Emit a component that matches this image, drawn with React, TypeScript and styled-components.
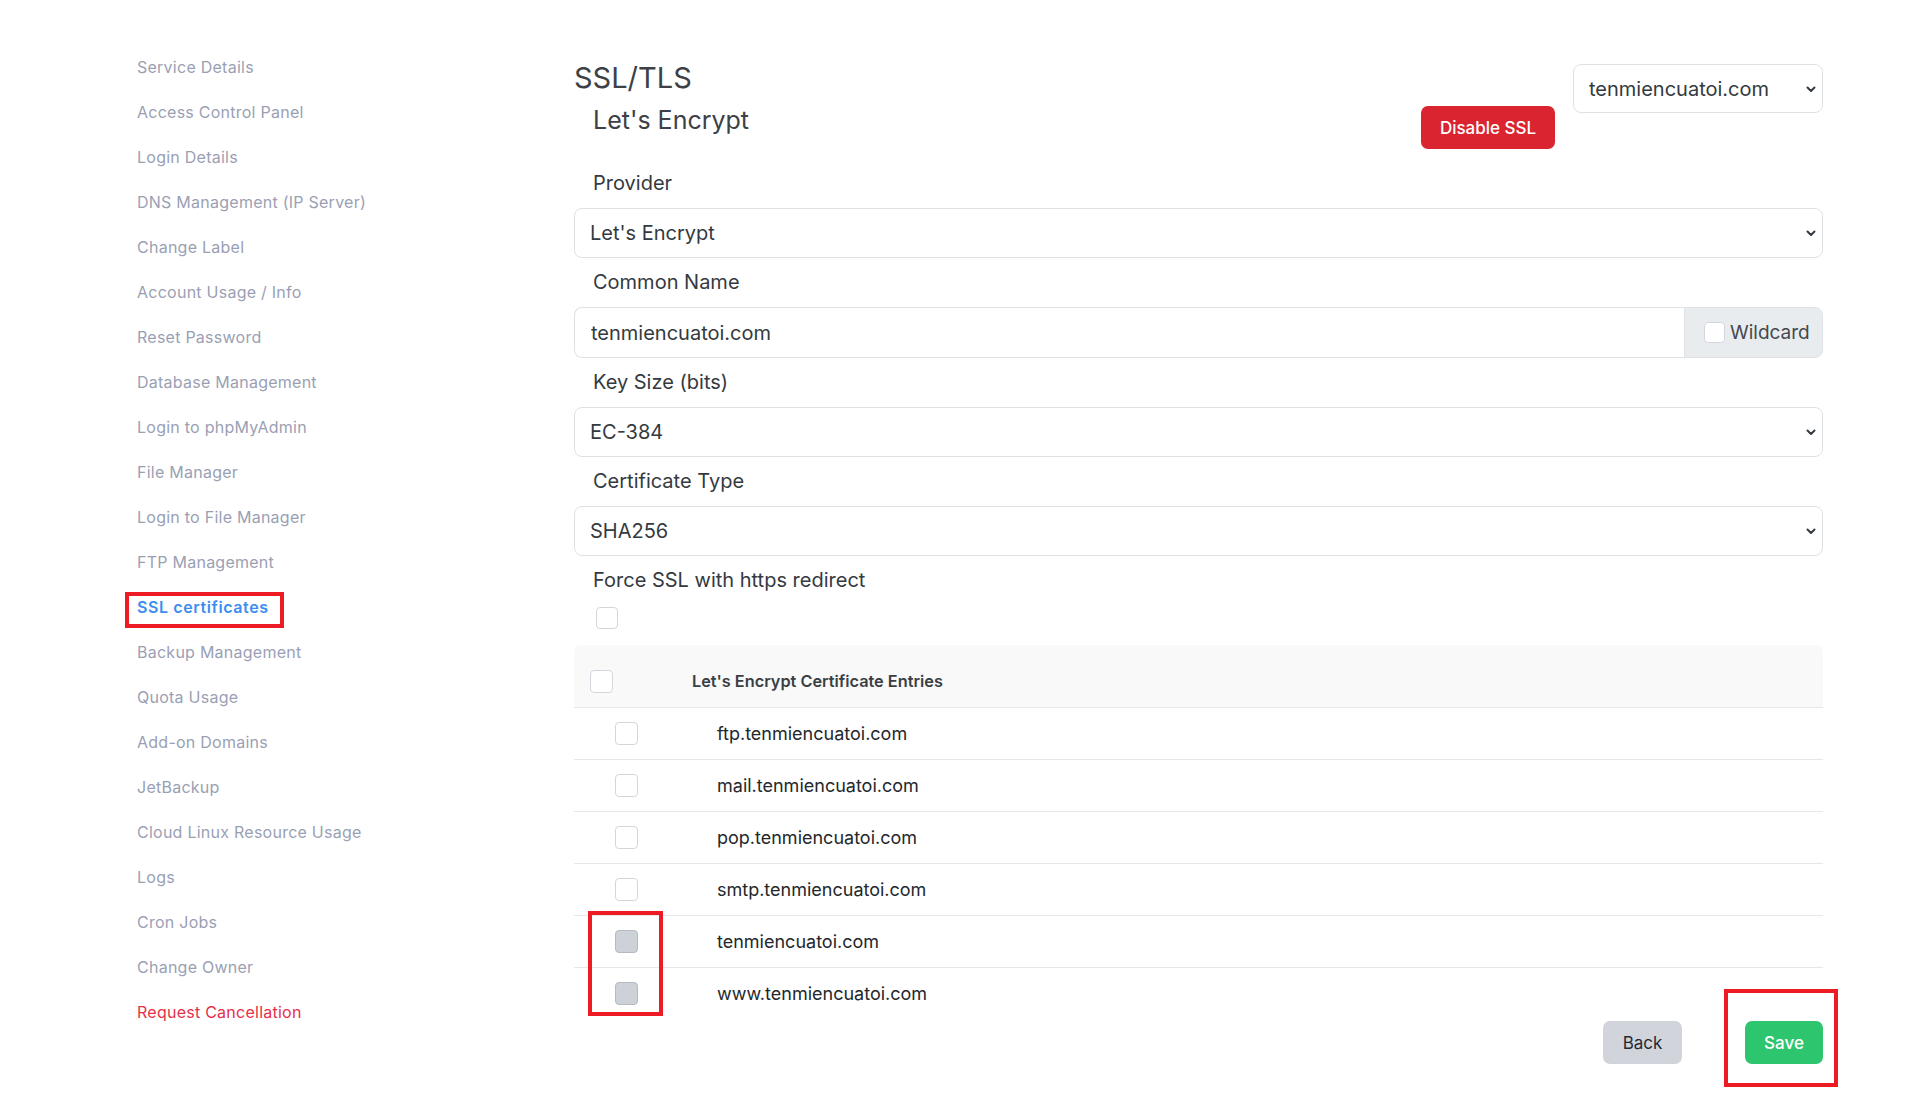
import React from "react";
import styled, { createGlobalStyle } from "styled-components";

const GlobalStyle = createGlobalStyle`
  html, body {
    margin: 0;
    padding: 0;
    background: #ffffff;
  }
  body {
    font-family: Inter, "Noto Sans", "Liberation Sans", sans-serif;
    color: #343a40;
  }
  * { box-sizing: border-box; }
`;

const ANNOTATION = "#ed1c24";

const Page = styled.div`
  display: flex;
  align-items: flex-start;
  width: 1920px;
  min-height: 1116px;
  padding-left: 137px;
`;

const Sidebar = styled.nav`
  width: 437px;
  flex-shrink: 0;
  display: flex;
  flex-direction: column;
  padding-top: 44px;
`;

const NavItem = styled.a<{ $active?: boolean; $danger?: boolean }>`
  display: flex;
  align-items: center;
  height: 45px;
  font-size: 16px;
  letter-spacing: ${(p) => (p.$active ? "0.6px" : "0.25px")};
  text-decoration: none;
  cursor: pointer;
  font-weight: ${(p) => (p.$active ? 600 : 400)};
  color: ${(p) => (p.$active ? "#3b8ef0" : p.$danger ? "#e5304a" : "#9a9fb4")};
`;

const Highlighted = styled.span`
  position: relative;
  &::after {
    content: "";
    position: absolute;
    left: -12px;
    right: -15px;
    top: -5px;
    bottom: -11px;
    border: 4px solid ${ANNOTATION};
    pointer-events: none;
  }
`;

const Main = styled.main`
  width: 1249px;
  flex-shrink: 0;
  padding-top: 60px;
  display: flex;
  flex-direction: column;
`;

const Header = styled.div`
  display: flex;
  justify-content: space-between;
  align-items: flex-start;
  height: 99px;
`;

const TitleBlock = styled.div`
  display: flex;
  flex-direction: column;
`;

const Title = styled.h1`
  margin: 0;
  font-size: 29px;
  line-height: 36px;
  font-weight: 400;
  color: #3d4146;
`;

const Subtitle = styled.h2`
  margin: 9px 0 0 19px;
  font-size: 25px;
  line-height: 30px;
  font-weight: 400;
  color: #3d4146;
`;

const HeaderActions = styled.div`
  display: flex;
  align-items: flex-start;
  gap: 18px;
`;

const Button = styled.button<{ $variant: "danger" | "success" | "secondary" }>`
  height: 43px;
  border: none;
  border-radius: 7px;
  font-family: inherit;
  font-size: 17px;
  font-weight: ${(p) => (p.$variant === "secondary" ? 400 : 500)};
  cursor: pointer;
  padding: 0 18px;
  background: ${(p) =>
    p.$variant === "danger" ? "#da2530" : p.$variant === "success" ? "#2dc56d" : "#d1d5db"};
  color: ${(p) => (p.$variant === "secondary" ? "#1f2937" : "#ffffff")};
`;

const DisableButton = styled(Button)`
  margin-top: 46px;
  width: 134px;
`;

const SelectWrap = styled.div<{ $width?: number }>`
  position: relative;
  width: ${(p) => (p.$width ? `${p.$width}px` : "100%")};
  margin-top: ${(p) => (p.$width ? "4px" : "0")};
`;

const Select = styled.select<{ $height: number }>`
  appearance: none;
  -webkit-appearance: none;
  width: 100%;
  height: ${(p) => p.$height}px;
  border: 1px solid #dee2e6;
  border-radius: 8px;
  background: #ffffff;
  padding: 0 40px 0 15px;
  font-family: inherit;
  font-size: 20px;
  color: #343a40;
  outline: none;
`;

const Chevron = styled.svg`
  position: absolute;
  right: 6px;
  top: 50%;
  width: 12px;
  height: 12px;
  margin-top: -6px;
  pointer-events: none;
`;

const FieldLabel = styled.label`
  display: block;
  padding: 12px 19px 13px;
  font-size: 20px;
  line-height: 24px;
  color: #343a40;
`;

const InputGroup = styled.div`
  display: flex;
  height: 51px;
`;

const TextInput = styled.input`
  flex: 1;
  min-width: 0;
  height: 100%;
  border: 1px solid #dee2e6;
  border-right: none;
  border-radius: 8px 0 0 8px;
  padding: 0 16px;
  font-family: inherit;
  font-size: 20px;
  color: #343a40;
  outline: none;
`;

const Addon = styled.label`
  width: 139px;
  height: 100%;
  display: flex;
  align-items: center;
  gap: 5px;
  padding-left: 19px;
  background: #e9ecef;
  border: 1px solid #dee2e6;
  border-radius: 0 8px 8px 0;
  font-size: 19px;
  color: #454a50;
`;

const Box = styled.span<{ $checked?: boolean; $size?: number }>`
  display: inline-block;
  flex-shrink: 0;
  width: ${(p) => p.$size ?? 22}px;
  height: ${(p) => p.$size ?? 22}px;
  border-radius: 4px;
  border: 1px solid ${(p) => (p.$checked ? "#b6bbc3" : "#d3d7dd")};
  background: ${(p) => (p.$checked ? "#cdd2d9" : "#ffffff")};
`;

const ForceRow = styled.div`
  display: flex;
  padding: 2px 0 16px 22px;
`;

const Table = styled.div`
  position: relative;
  display: flex;
  flex-direction: column;
`;

const TableHead = styled.div`
  display: flex;
  align-items: center;
  height: 63px;
  padding: 10px 0 0 16px;
  background: #f9f9f9;
  border-radius: 6px 6px 0 0;
  border-bottom: 1px solid #e6e7e9;
`;

const HeadText = styled.span`
  margin-left: 79px;
  font-size: 16.3px;
  font-weight: 600;
  color: #3a3f44;
`;

const Row = styled.div<{ $last?: boolean }>`
  display: flex;
  align-items: center;
  height: ${(p) => (p.$last ? 51 : 52)}px;
  padding-left: 41px;
  border-bottom: ${(p) => (p.$last ? "none" : "1px solid #e6e7e9")};
`;

const RowText = styled.span`
  margin-left: 79px;
  font-size: 18px;
  color: #24282c;
`;

const ColumnMark = styled.div`
  position: absolute;
  left: 14px;
  top: 266px;
  width: 75px;
  height: 105px;
  border: 4px solid ${ANNOTATION};
  pointer-events: none;
`;

const Footer = styled.div`
  display: flex;
  justify-content: flex-end;
  gap: 63px;
  padding-top: 2px;
`;

const SaveWrap = styled.div`
  position: relative;
  &::after {
    content: "";
    position: absolute;
    left: -21px;
    right: -15px;
    top: -32px;
    bottom: -23px;
    border: 4px solid ${ANNOTATION};
    pointer-events: none;
  }
`;

const navItems = [
  "Service Details",
  "Access Control Panel",
  "Login Details",
  "DNS Management (IP Server)",
  "Change Label",
  "Account Usage / Info",
  "Reset Password",
  "Database Management",
  "Login to phpMyAdmin",
  "File Manager",
  "Login to File Manager",
  "FTP Management",
  "SSL certificates",
  "Backup Management",
  "Quota Usage",
  "Add-on Domains",
  "JetBackup",
  "Cloud Linux Resource Usage",
  "Logs",
  "Cron Jobs",
  "Change Owner",
  "Request Cancellation",
];

const entries = [
  { name: "ftp.tenmiencuatoi.com", checked: false },
  { name: "mail.tenmiencuatoi.com", checked: false },
  { name: "pop.tenmiencuatoi.com", checked: false },
  { name: "smtp.tenmiencuatoi.com", checked: false },
  { name: "tenmiencuatoi.com", checked: true },
  { name: "www.tenmiencuatoi.com", checked: true },
];

const ChevronIcon = () => (
  <Chevron viewBox="0 0 12 12">
    <path d="M2.5 4.5 L6 8 L9.5 4.5" fill="none" stroke="#343a40" strokeWidth="2" strokeLinecap="round" strokeLinejoin="round" />
  </Chevron>
);

const SelectField = ({ value, width, height = 50 }: { value: string; width?: number; height?: number }) => (
  <SelectWrap $width={width}>
    <Select $height={height} defaultValue={value}>
      <option>{value}</option>
    </Select>
    <ChevronIcon />
  </SelectWrap>
);

export default function App() {
  return (
    <>
      <GlobalStyle />
      <Page>
        <Sidebar>
          {navItems.map((item) =>
            item === "SSL certificates" ? (
              <NavItem key={item} $active>
                <Highlighted>{item}</Highlighted>
              </NavItem>
            ) : (
              <NavItem key={item} $danger={item === "Request Cancellation"}>
                {item}
              </NavItem>
            )
          )}
        </Sidebar>

        <Main>
          <Header>
            <TitleBlock>
              <Title>SSL/TLS</Title>
              <Subtitle>Let's Encrypt</Subtitle>
            </TitleBlock>
            <HeaderActions>
              <DisableButton $variant="danger">Disable SSL</DisableButton>
              <SelectField value="tenmiencuatoi.com" width={250} height={49} />
            </HeaderActions>
          </Header>

          <FieldLabel>Provider</FieldLabel>
          <SelectField value="Let's Encrypt" />

          <FieldLabel>Common Name</FieldLabel>
          <InputGroup>
            <TextInput defaultValue="tenmiencuatoi.com" />
            <Addon>
              <Box $size={21} />
              Wildcard
            </Addon>
          </InputGroup>

          <FieldLabel>Key Size (bits)</FieldLabel>
          <SelectField value="EC-384" />

          <FieldLabel>Certificate Type</FieldLabel>
          <SelectField value="SHA256" />

          <FieldLabel>Force SSL with https redirect</FieldLabel>
          <ForceRow>
            <Box />
          </ForceRow>

          <Table>
            <TableHead>
              <Box $size={23} />
              <HeadText>Let's Encrypt Certificate Entries</HeadText>
            </TableHead>
            {entries.map((e, i) => (
              <Row key={e.name} $last={i === entries.length - 1}>
                <Box $size={23} $checked={e.checked} />
                <RowText>{e.name}</RowText>
              </Row>
            ))}
            <ColumnMark />
          </Table>

          <Footer>
            <Button $variant="secondary" style={{ width: 79 }}>Back</Button>
            <SaveWrap>
              <Button $variant="success" style={{ width: 78 }}>Save</Button>
            </SaveWrap>
          </Footer>
        </Main>
      </Page>
    </>
  );
}
